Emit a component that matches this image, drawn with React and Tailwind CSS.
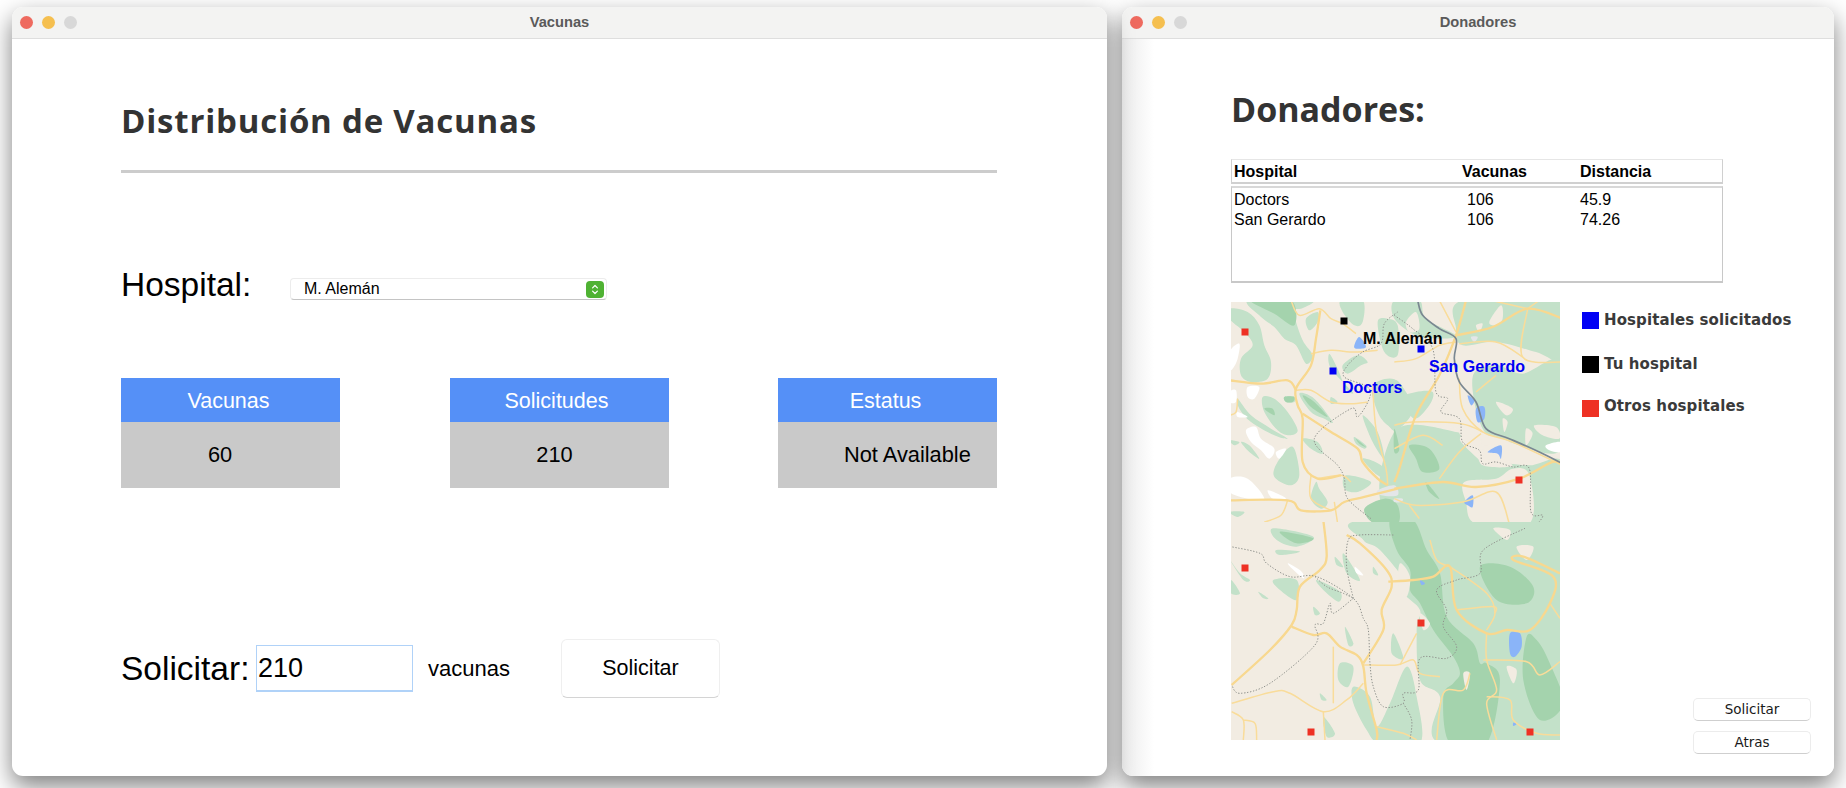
const sans = "font-['Liberation_Sans',Arial,sans-serif]";
const lucida = "font-['DejaVu_Sans',sans-serif]";
const humanist = "font-['Open_Sans',sans-serif]";

// catmull-rom through the traced points, coords are the 3x crops of the map
const smooth = (pts, closed = false) => {
  const n = pts.length;
  const at = (i) => (closed ? pts[(i + n) % n] : pts[Math.max(0, Math.min(n - 1, i))]);
  let d = `M${pts[0][0]} ${pts[0][1]}`;
  const last = closed ? n : n - 1;
  for (let i = 0; i < last; i++) {
    const [p0, p1, p2, p3] = [at(i - 1), at(i), at(i + 1), at(i + 2)];
    const c1 = [p1[0] + (p2[0] - p0[0]) / 6, p1[1] + (p2[1] - p0[1]) / 6];
    const c2 = [p2[0] - (p3[0] - p1[0]) / 6, p2[1] - (p3[1] - p1[1]) / 6];
    d += `C${c1[0]} ${c1[1]} ${c2[0]} ${c2[1]} ${p2[0]} ${p2[1]}`;
  }
  return d + (closed ? 'Z' : '');
};

const northWest = {
  x: 0, y: 0, clip: 'upper',
  green: [
    [[50,-5],[190,-5],[190,40],[215,115],[245,160],[225,185],[195,130],[160,110],[130,75],[90,45]],
    [[-5,20],[50,30],[85,70],[100,130],[120,180],[110,230],[60,240],[30,220],[30,170],[65,130],[40,90],[-5,50]],
    [[330,-5],[395,-5],[395,60],[370,70],[335,30]],
    [[225,50],[260,30],[260,60],[235,85]],
    [[180,-5],[250,-5],[210,20],[170,15]],
    [[295,155],[320,200],[345,260],[365,270],[300,200]],
    [[335,190],[380,160],[410,180],[390,190],[350,215]],
    [[440,60],[470,50],[500,70],[500,160],[460,150]],
    [[205,275],[250,290],[305,360],[280,350],[240,330]],
    [[160,285],[190,285],[190,300],[165,300]],
    [[95,285],[130,290],[170,330],[200,385],[175,400],[140,385],[100,330]],
    [[20,290],[60,340],[120,380],[170,410],[130,400],[60,360],[25,320]],
    [[-5,415],[25,420],[10,430]],
    [[30,420],[55,430],[85,470],[55,450]],
    [[130,500],[165,445],[190,440],[205,520],[180,550],[135,530]],
    [[215,410],[260,420],[275,455],[240,440]],
    [[300,285],[320,300],[300,305]],
    [[255,540],[265,560],[290,600],[270,620],[240,590]],
    [[370,405],[405,430],[400,440],[375,425]],
    [[395,340],[440,390],[460,470],[425,420]],
    [[395,470],[450,490],[490,540],[440,520]],
    [[425,250],[500,240],[500,380],[470,370],[440,330]],
    [[345,520],[420,540],[380,570],[340,560]],
    [[-5,630],[40,630],[20,645]],
  ],
  dark: [
    [[60,-5],[180,-5],[190,70],[130,35]],
    [[100,320],[125,320],[130,340]],
    [[160,285],[190,285],[185,300],[165,300]],
    [[215,280],[250,300],[290,345],[240,315]],
    [[375,410],[405,435],[385,425]],
    [[400,620],[460,590],[500,610],[500,665],[430,665]],
  ],
  tan: [
    [[-5,255],[50,255],[80,325],[55,320],[30,275]],
    [[275,215],[290,225],[295,250],[280,245]],
  ],
  white: [
    [[-5,150],[25,125],[20,170],[5,200],[-5,200]],
    [[-5,270],[15,265],[15,300],[-5,300]],
    [[50,255],[85,255],[70,290],[50,285]],
    [[20,330],[50,345],[20,345]],
    [[45,385],[75,375],[90,410],[130,440],[115,470],[90,445],[60,420]],
    [[135,450],[165,440],[145,470]],
    [[-5,530],[50,530],[100,590],[50,590],[-5,570]],
    [[110,565],[140,575],[165,590],[125,590]],
  ],
  city: [[[440,565],[490,550],[500,580],[450,580]]],
  lake: [[[370,130],[385,105],[405,135],[375,140]]],
  major: [
    [[268,25],[255,110],[240,190],[195,260],[200,310],[215,350],[215,480],[260,530],[330,520]],
    [[215,335],[300,390],[380,440],[395,480],[440,530],[470,550]],
    [[-5,235],[90,245],[170,235],[195,265]],
    [[-5,595],[170,595],[210,625],[300,625],[340,600],[400,585],[500,560]],
  ],
  roads: [
    [[180,-5],[205,40],[265,20],[300,50],[335,65],[375,95]],
    [[240,155],[300,145],[370,150],[440,145]],
    [[195,265],[240,265],[300,300],[360,305],[410,300]],
    [[240,520],[240,590],[300,625]],
    [[260,530],[330,520],[360,540]],
    [[310,600],[320,665]],
    [[-5,340],[15,330],[20,290]],
    [[425,250],[435,380],[465,500],[470,550]],
    [[170,595],[150,640],[100,660]],
  ],
  dotted: [
    [[500,30],[460,65],[450,125],[395,150],[350,190],[340,225],[410,255],[415,290],[380,345],[360,320],[250,410],[320,490],[340,530],[350,590],[420,650]],
  ],
};

const northEast = {
  x: 165, y: 0, clip: 'upper',
  green: [
    [[-5,-5],[70,-5],[90,50],[180,100],[130,110],[60,100],[-5,50]],
    [[200,-5],[500,-5],[500,170],[420,150],[300,120],[200,130],[180,80]],
    [[230,225],[300,190],[380,215],[500,180],[500,440],[340,420],[260,380]],
    [[60,270],[110,270],[100,310],[55,350],[20,290]],
    [[-5,390],[180,390],[195,420],[260,480],[300,480],[400,490],[500,480],[500,665],[-5,665]],
    [[-5,240],[30,270],[50,330],[-5,380]],
  ],
  dark: [
    [[-5,380],[10,440],[-5,450]],
    [[40,430],[100,440],[130,500],[80,510],[60,470]],
    [[90,540],[130,590],[100,570]],
  ],
  tan: [
    [[280,60],[315,10],[320,50],[300,70]],
    [[240,70],[260,65],[250,90]],
    [[300,300],[350,320],[330,340]],
    [[415,370],[480,375],[490,410],[440,400]],
    [[390,380],[410,395],[390,430]],
    [[320,350],[335,360],[325,390]],
    [[205,540],[300,530],[350,500],[400,520],[400,665],[240,665],[210,600]],
    [[255,440],[350,490],[260,490]],
    [[270,400],[340,420],[260,430]],
    [[195,370],[220,330],[250,360],[250,390],[195,400]],
    [[140,270],[190,270],[190,370],[150,370],[130,340]],
    [[30,60],[60,30],[70,80],[40,90]],
  ],
  white: [[[450,430],[495,420],[495,450],[460,445]]],
  city: [[[-5,590],[20,590],[15,600],[-5,600]], [[225,105],[245,105],[235,120]]],
  lake: [
    [[215,280],[235,295],[225,310]],
    [[240,320],[265,315],[265,350],[245,360]],
    [[275,450],[315,430],[315,470],[305,455]],
    [[205,600],[230,580],[230,615],[215,610]],
  ],
  major: [
    [[210,-5],[180,100],[130,220],[60,340],[10,500],[-5,540]],
    [[-5,560],[140,540],[240,555],[370,530],[470,480],[500,490]],
    [[180,100],[290,75],[395,20],[500,50]],
  ],
  roads: [
    [[395,20],[380,165],[500,180]],
    [[395,20],[430,-5]],
    [[380,165],[300,120],[190,125]],
    [[285,-5],[395,20]],
    [[190,230],[200,320],[260,390],[350,420],[500,490]],
    [[130,-5],[180,90]],
    [[-5,370],[50,360],[195,365],[260,390]],
    [[255,395],[190,450],[130,530]],
    [[-5,180],[60,170],[130,130],[180,120]],
    [[300,220],[240,270]],
    [[-5,590],[60,610],[200,600],[300,570],[340,665]],
    [[40,610],[70,650]],
    [[-5,440],[80,400],[140,430]],
  ],
  river: [[65,-5],[80,40],[130,80],[180,110],[175,170],[190,240],[240,300],[270,380],[340,410],[430,450],[500,485]],
  dotted: [
    [[-5,40],[50,80],[110,140],[120,270],[155,290],[135,330],[190,350],[200,420],[250,445],[260,485],[300,480],[350,495],[400,500],[405,630],[440,640],[425,665]],
  ],
};

const south = {
  x: -11, y: 228, clip: 'lower',
  green: [
    [[430,-30],[1030,-30],[1030,640],[660,640],[660,500],[600,450],[590,300],[600,240],[550,190],[560,160],[480,60],[430,30]],
    [[160,-5],[280,20],[230,50],[170,30]],
    [[30,90],[60,130],[90,150],[70,150]],
    [[33,150],[60,190],[33,190]],
    [[160,150],[230,150],[230,210],[180,180]],
    [[115,185],[145,205],[130,205]],
    [[290,150],[360,185],[355,215],[310,180]],
    [[280,230],[300,250],[285,255]],
    [[375,290],[400,340],[385,345]],
    [[520,310],[550,385],[515,370]],
    [[360,400],[400,410],[385,470],[355,450]],
    [[400,470],[450,500],[470,590],[510,520],[560,410],[590,500],[600,640],[480,640],[440,600],[400,520]],
    [[310,560],[345,610],[320,620]],
    [[300,490],[320,510],[305,510]],
    [[345,80],[370,110],[350,105]],
    [[370,70],[420,150],[380,130]],
    [[460,110],[475,135],[460,130]],
    [[170,60],[240,65],[180,75]],
  ],
  dark: [
    [[510,-30],[580,-30],[620,60],[660,130],[680,260],[760,340],[780,400],[800,400],[840,450],[800,640],[690,640],[670,500],[700,460],[720,430],[700,380],[640,300],[600,220],[570,180],[570,120],[530,60]],
    [[780,110],[870,110],[940,170],[920,220],[830,210]],
    [[920,320],[950,330],[985,390],[1030,520],[960,570],[910,450]],
    [[180,5],[280,25],[230,40]],
  ],
  tan: [
    [[820,-5],[870,0],[860,30]],
    [[890,50],[940,50],[920,90]],
    [[540,100],[570,140],[560,200],[535,170]],
    [[600,250],[630,280],[610,300]],
    [[730,430],[750,430],[740,480]],
    [[860,410],[890,420],[880,460]],
  ],
  white: [
    [[205,100],[245,125],[250,145],[215,115]],
    [[405,110],[430,135],[410,130]],
  ],
  city: [],
  lake: [
    [[870,310],[900,310],[905,350],[885,380],[870,370]],
    [[880,578],[890,582],[880,588]],
    [[600,150],[615,160],[605,165]],
  ],
  major: [
    [[310,-30],[320,80],[300,120],[240,170],[230,240],[215,285],[150,360],[35,465]],
    [[215,290],[280,315],[320,310],[360,350],[410,375],[430,410],[440,490],[470,600],[470,630]],
    [[380,15],[420,40],[500,120],[515,170],[485,240],[490,300],[430,400]],
    [[505,155],[580,150],[640,140],[690,110],[710,240],[800,310],[860,300],[930,300],[990,220],[1000,140],[880,90],[910,80],[1020,130]],
  ],
  roads: [
    [[630,30],[650,90],[690,110]],
    [[690,110],[800,190],[825,250],[800,300]],
    [[800,310],[800,390],[830,480],[800,520],[830,630]],
    [[790,390],[920,395],[960,435],[1020,395]],
    [[430,405],[530,405],[580,390],[600,430],[660,440]],
    [[750,430],[730,480],[670,490],[650,630]],
    [[35,520],[160,485],[210,490],[310,545],[380,510],[430,460]],
    [[340,350],[340,520]],
    [[310,545],[315,630]],
    [[35,545],[70,570],[70,630]],
    [[70,570],[105,580],[110,630]],
    [[800,500],[870,510],[880,570],[950,610],[1020,615]],
    [[470,590],[550,610],[590,630]],
    [[590,310],[540,405]],
    [[710,240],[820,230],[825,250]],
    [[990,220],[1020,265]],
  ],
  dotted: [
    [[915,-5],[790,60],[780,130],[710,150],[650,180],[680,240],[670,290],[710,350],[680,385],[600,385],[595,480],[550,490],[550,520],[490,530],[460,470],[450,400],[445,300],[430,265],[400,205],[290,140],[210,140],[140,100],[120,70],[33,50]],
    [[400,205],[380,110],[385,30],[420,15],[520,15]],
    [[285,140],[320,170],[370,190],[400,205]],
    [[400,205],[340,250],[330,220],[310,280],[285,285],[285,345],[150,460],[60,490],[35,465]],
    [[550,520],[575,570],[570,630]],
  ],
};

const mapParts = [northWest, northEast, south];

const tileProps = (p) => ({
  transform: `translate(${p.x} ${p.y}) scale(0.3333)`,
});

function MapSvg() {
  const fills = (key, color) =>
    mapParts.map((p, i) => (
      <g key={key + i} clipPath={`url(#${p.clip})`}>
        <g {...tileProps(p)}>
          {(p[key] || []).map((pts, j) => (
            <path key={j} d={smooth(pts, true)} fill={color} />
          ))}
        </g>
      </g>
    ));
  const lines = (key, props) =>
    mapParts.map((p, i) => (
      <g key={key + i} clipPath={`url(#${p.clip})`}>
        <g {...tileProps(p)}>
          {(p[key] || []).map((pts, j) => (
            <path key={j} d={smooth(pts)} fill="none" {...props} />
          ))}
        </g>
      </g>
    ));

  return (
    <svg viewBox="0 0 329 438" className="block w-[329px] h-[438px]">
      <defs>
        <filter id="soft" x="0" y="0" width="100%" height="100%">
          <feGaussianBlur stdDeviation="0.6" />
        </filter>
        <clipPath id="upper">
          <rect x="0" y="0" width="329" height="220" />
        </clipPath>
        <clipPath id="lower">
          <rect x="0" y="220" width="329" height="218" />
        </clipPath>
      </defs>
      <rect width="329" height="438" fill="#f2ece2" />
      <g filter="url(#soft)">
        {fills('green', '#c3e1c9')}
        {fills('dark', '#a4d3ad')}
        {fills('tan', '#f2ece2')}
        {fills('white', '#ffffff')}
        {fills('city', '#e4e6e8')}
        {fills('lake', '#8ab4f8')}
        {lines('roads', { stroke: '#f9dc9a', strokeWidth: 4.5 })}
        {lines('major', { stroke: '#f8d88f', strokeWidth: 7 })}
        {lines('dotted', { stroke: '#8f918c', strokeWidth: 3, strokeDasharray: '4 5' })}
        <g {...tileProps(northEast)}>
          <path d={smooth(northEast.river)} fill="none" stroke="#7a8791" strokeWidth="5" />
        </g>
      </g>
    </svg>
  );
}

const pins = [
  { x: 113, y: 19, color: 'bg-black' },
  { x: 14, y: 30, color: 'bg-[#ee3124]' },
  { x: 190, y: 47, color: 'bg-[#0000f5]' },
  { x: 102, y: 69, color: 'bg-[#0000f5]' },
  { x: 288, y: 178, color: 'bg-[#ee3124]' },
  { x: 14, y: 266, color: 'bg-[#ee3124]' },
  { x: 190, y: 321, color: 'bg-[#ee3124]' },
  { x: 80, y: 430, color: 'bg-[#ee3124]' },
  { x: 299, y: 430, color: 'bg-[#ee3124]' },
];

function HospitalMap() {
  return (
    <div className="relative w-[329px] h-[438px] shrink-0 overflow-hidden">
      <MapSvg />
      {pins.map((p, i) => (
        <span
          key={i}
          className={`absolute w-[7px] h-[7px] -translate-x-1/2 -translate-y-1/2 ${p.color}`}
          style={{ left: p.x, top: p.y }}
        />
      ))}
      <span className={`absolute left-[132px] top-[28px] text-[16px] leading-[18px] font-bold text-black ${sans}`}>M. Alemán</span>
      <span className={`absolute left-[198px] top-[56px] text-[16px] leading-[18px] font-bold text-[#0000f5] ${sans}`}>San Gerardo</span>
      <span className={`absolute left-[111px] top-[77px] text-[16px] leading-[18px] font-bold text-[#0000f5] ${sans}`}>Doctors</span>
    </div>
  );
}

function TitleBar({ title }) {
  return (
    <div className="grid grid-cols-3 items-center h-[32px] shrink-0 bg-[#f3f3f2] border-b border-[#dedede] px-[8px]">
      <div className="flex gap-[9px]">
        <span className="w-[13px] h-[13px] rounded-full bg-[#ee6a5f]" />
        <span className="w-[13px] h-[13px] rounded-full bg-[#f5bf4f]" />
        <span className="w-[13px] h-[13px] rounded-full bg-[#d8d8d8]" />
      </div>
      <div className={`text-center text-[14.7px] font-bold text-[#5a5a5a] ${sans}`}>{title}</div>
      <div />
    </div>
  );
}

const cards = [
  { head: 'Vacunas', value: '60', headClass: 'pr-[4px]', valueClass: 'justify-center pr-[21px]' },
  { head: 'Solicitudes', value: '210', headClass: 'pr-[5px]', valueClass: 'justify-center pr-[9px]' },
  { head: 'Estatus', value: 'Not Available', headClass: 'pr-[4px]', valueClass: 'pl-[66px]' },
];

function VacunasWindow() {
  return (
    <div className="relative z-10 flex flex-col w-[1095px] h-[769px] shrink-0 bg-white rounded-[11px] overflow-hidden shadow-[0_10px_24px_rgba(0,0,0,0.5)]">
      <TitleBar title="Vacunas" />
      <div className={`flex flex-col pl-[109px] text-black ${sans}`}>
        <h1 className={`mt-[62px] text-[33px] leading-[40px] font-bold tracking-[0.8px] text-[#333333] ${humanist}`}>
          Distribución de Vacunas
        </h1>
        <div className="mt-[29px] w-[876px] h-[3px] bg-[#cccccc]" />

        <div className="flex items-center mt-[105px] h-[22px]">
          <span className="w-[169px] shrink-0 mb-[9px] text-[33.5px] leading-[40px]">Hospital:</span>
          <div className="flex items-center justify-between w-[317px] h-[22px] pl-[13px] pr-[2px] bg-white rounded-[4px] border border-[#ececec] border-b-[#c4c4c4]">
            <span className="text-[16px]">M. Alemán</span>
            <span className="flex items-center justify-center w-[18px] h-[17px] rounded-[4px] bg-[#4fb233]">
              <svg viewBox="0 0 10 14" className="w-[8px] h-[13px]" fill="none" stroke="#ffffff" strokeWidth="1.5" strokeLinecap="round" strokeLinejoin="round">
                <path d="M2 5 5 2 8 5" />
                <path d="M2 9 5 12 8 9" />
              </svg>
            </span>
          </div>
        </div>

        <div className="flex gap-[109.5px] mt-[78px]">
          {cards.map((c) => (
            <div key={c.head} className="w-[219px] shrink-0">
              <div className={`flex items-center justify-center h-[44px] bg-[#5590f7] text-white text-[21.5px] pt-[3px] ${c.headClass}`}>
                {c.head}
              </div>
              <div className={`flex items-center h-[66px] bg-[#c9c9c9] text-[21.8px] ${c.valueClass}`}>
                {c.value}
              </div>
            </div>
          ))}
        </div>

        <div className="flex items-center mt-[151px] h-[59px]">
          <span className="w-[135px] shrink-0 text-[33.5px] leading-[40px]">Solicitar:</span>
          <input
            defaultValue="210"
            className="w-[157px] h-[47px] shrink-0 pl-[1px] text-[27px] bg-white border border-[#b0d2f8] border-b-2 outline-none"
          />
          <span className="ml-[15px] w-[133px] shrink-0 text-[22px]">vacunas</span>
          <button className="w-[159px] h-[59px] shrink-0 text-[21.5px] bg-white rounded-[6px] border border-[#efefef] border-b-[#d4d4d4]">
            Solicitar
          </button>
        </div>
      </div>
    </div>
  );
}

const donors = [
  { name: 'Doctors', vacunas: 106, dist: '45.9' },
  { name: 'San Gerardo', vacunas: 106, dist: '74.26' },
];

const legend = [
  { label: 'Hospitales solicitados', color: 'bg-[#0000f5]', text: '' },
  { label: 'Tu hospital', color: 'bg-black', text: '' },
  { label: 'Otros hospitales', color: 'bg-[#ee3124]', text: '-translate-y-[2px]' },
];

function DonadoresWindow() {
  return (
    <div className="flex flex-col w-[712px] h-[769px] shrink-0 bg-white rounded-[11px] overflow-hidden shadow-[0_10px_24px_rgba(0,0,0,0.5)]">
      <TitleBar title="Donadores" />
      <div className={`flex flex-1 flex-col pl-[109px] text-[16px] text-black bg-[linear-gradient(90deg,#ebebeb,#ffffff_32px)] ${sans}`}>
        <h1 className={`mt-[50px] text-[34px] leading-[40px] font-bold text-[#333333] ${humanist}`}>
          Donadores:
        </h1>

        <div className="mt-[30px] w-[492px]">
          <div className="grid grid-cols-[228px_118px_1fr] items-center h-[25px] pl-[2px] font-bold bg-white border border-[#d0d0d0] border-t-[#e6e6e6] border-b-2">
            <span>Hospital</span>
            <span>Vacunas</span>
            <span>Distancia</span>
          </div>
          <div className="mt-[2px] h-[97px] pl-[2px] bg-white border border-[#c8c8c8] border-t-2 border-t-[#d8d8d8] border-b-2">
            {donors.map((d) => (
              <div key={d.name} className="grid grid-cols-[228px_118px_1fr] items-center h-[20px]">
                <span>{d.name}</span>
                <span className="pl-[5px]">{d.vacunas}</span>
                <span>{d.dist}</span>
              </div>
            ))}
          </div>
        </div>

        <div className="flex items-start mt-[19px]">
          <HospitalMap />
          <div className="flex flex-col ml-[22px] pt-[10px]">
            <div className="flex flex-col gap-[27px]">
              {legend.map((l) => (
                <div key={l.label} className="flex items-center h-[17px]">
                  <span className={`w-[17px] h-[17px] shrink-0 ${l.color}`} />
                  <span className={`ml-[5px] whitespace-nowrap text-[15px] font-bold tracking-[0.1px] text-[#3a3a3a] ${lucida} ${l.text}`}>
                    {l.label}
                  </span>
                </div>
              ))}
            </div>
            <div className={`flex flex-col gap-[10px] mt-[281px] ml-[111px] text-[13.5px] text-[#1a1a1a] ${lucida}`}>
              <button className="w-[118px] h-[23px] bg-white rounded-[5px] border border-[#ececec] border-b-[#cfcfcf]">Solicitar</button>
              <button className="w-[118px] h-[23px] bg-white rounded-[5px] border border-[#ececec] border-b-[#cfcfcf]">Atras</button>
            </div>
          </div>
        </div>
      </div>
    </div>
  );
}

export default function App() {
  return (
    <div className="flex gap-[15px] w-[1846px] h-[788px] overflow-hidden pl-[12px] pt-[7px] bg-white">
      <VacunasWindow />
      <DonadoresWindow />
    </div>
  );
}
